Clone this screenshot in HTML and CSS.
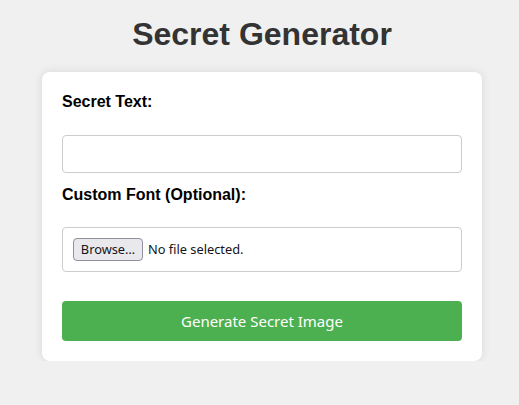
FILE: index.html
```html
<!DOCTYPE html>
<html lang="en">
<head>
<meta charset="utf-8">
<title>Secret Generator</title>
<link rel="stylesheet" href="styles.css">
</head>
<body>
<h1 class="title">Secret Generator</h1>
<form class="card">
  <label class="label" for="secret">Secret Text:</label>
  <input class="text-input" id="secret" type="text">
  <label class="label label-font">Custom Font (Optional):</label>
  <div class="file-box">
    <button type="button" class="browse">Browse…</button>
    <span class="file-status">No file selected.</span>
  </div>
  <button type="button" class="generate">Generate Secret Image</button>
</form>
</body>
</html>
```
FILE: styles.css
```css
html, body {
  margin: 0;
  padding: 0;
}
body {
  background: #f0f0f0;
  font-family: "Liberation Sans", Arial, sans-serif;
  padding-left: 5px;
  padding-top: 16px;
}
.title {
  margin: 0 0 19px;
  text-align: center;
  font-size: 32px;
  font-weight: bold;
  color: #333;
  line-height: 37px;
}
.card {
  width: 400px;
  margin: 0 auto;
  background: #fff;
  border-radius: 8px;
  padding: 20px;
  box-shadow: 0 0 10px rgba(0, 0, 0, 0.1);
  display: flex;
  flex-direction: column;
}
.label {
  display: block;
  font-size: 16px;
  font-weight: bold;
  color: #000;
  line-height: 18px;
  margin-top: 1px;
  margin-bottom: 24px;
}
.label-font {
  margin-top: 13px;
  margin-bottom: 23px;
}
.text-input {
  box-sizing: border-box;
  width: 400px;
  height: 38px;
  margin: 0;
  border: 1px solid #ccc;
  border-radius: 4px;
  background: #fff;
  padding: 8px 10px;
  font-family: "Noto Sans", sans-serif;
  font-size: 14px;
}
.file-box {
  box-sizing: border-box;
  height: 45px;
  border: 1px solid #ccc;
  border-radius: 4px;
  padding: 0 10px;
  display: flex;
  align-items: center;
  gap: 5px;
  font-family: "Noto Sans", sans-serif;
  font-size: 12.8px;
  color: #15141a;
}
.browse {
  box-sizing: border-box;
  height: 23px;
  width: 70px;
  padding: 0;
  margin: 0;
  border: 1px solid #8f8f9d;
  border-radius: 4px;
  background: #e9e9ed;
  color: #15141a;
  font-family: "Noto Sans", sans-serif;
  font-size: 12.8px;
  line-height: 21px;
}
.file-status {
  line-height: 21px;
}
.generate {
  margin-top: 29px;
  height: 40px;
  width: 100%;
  border: none;
  border-radius: 4px;
  background: #4caf50;
  color: #fff;
  font-family: "Noto Sans", sans-serif;
  font-size: 15px;
  padding: 0;
}
```
